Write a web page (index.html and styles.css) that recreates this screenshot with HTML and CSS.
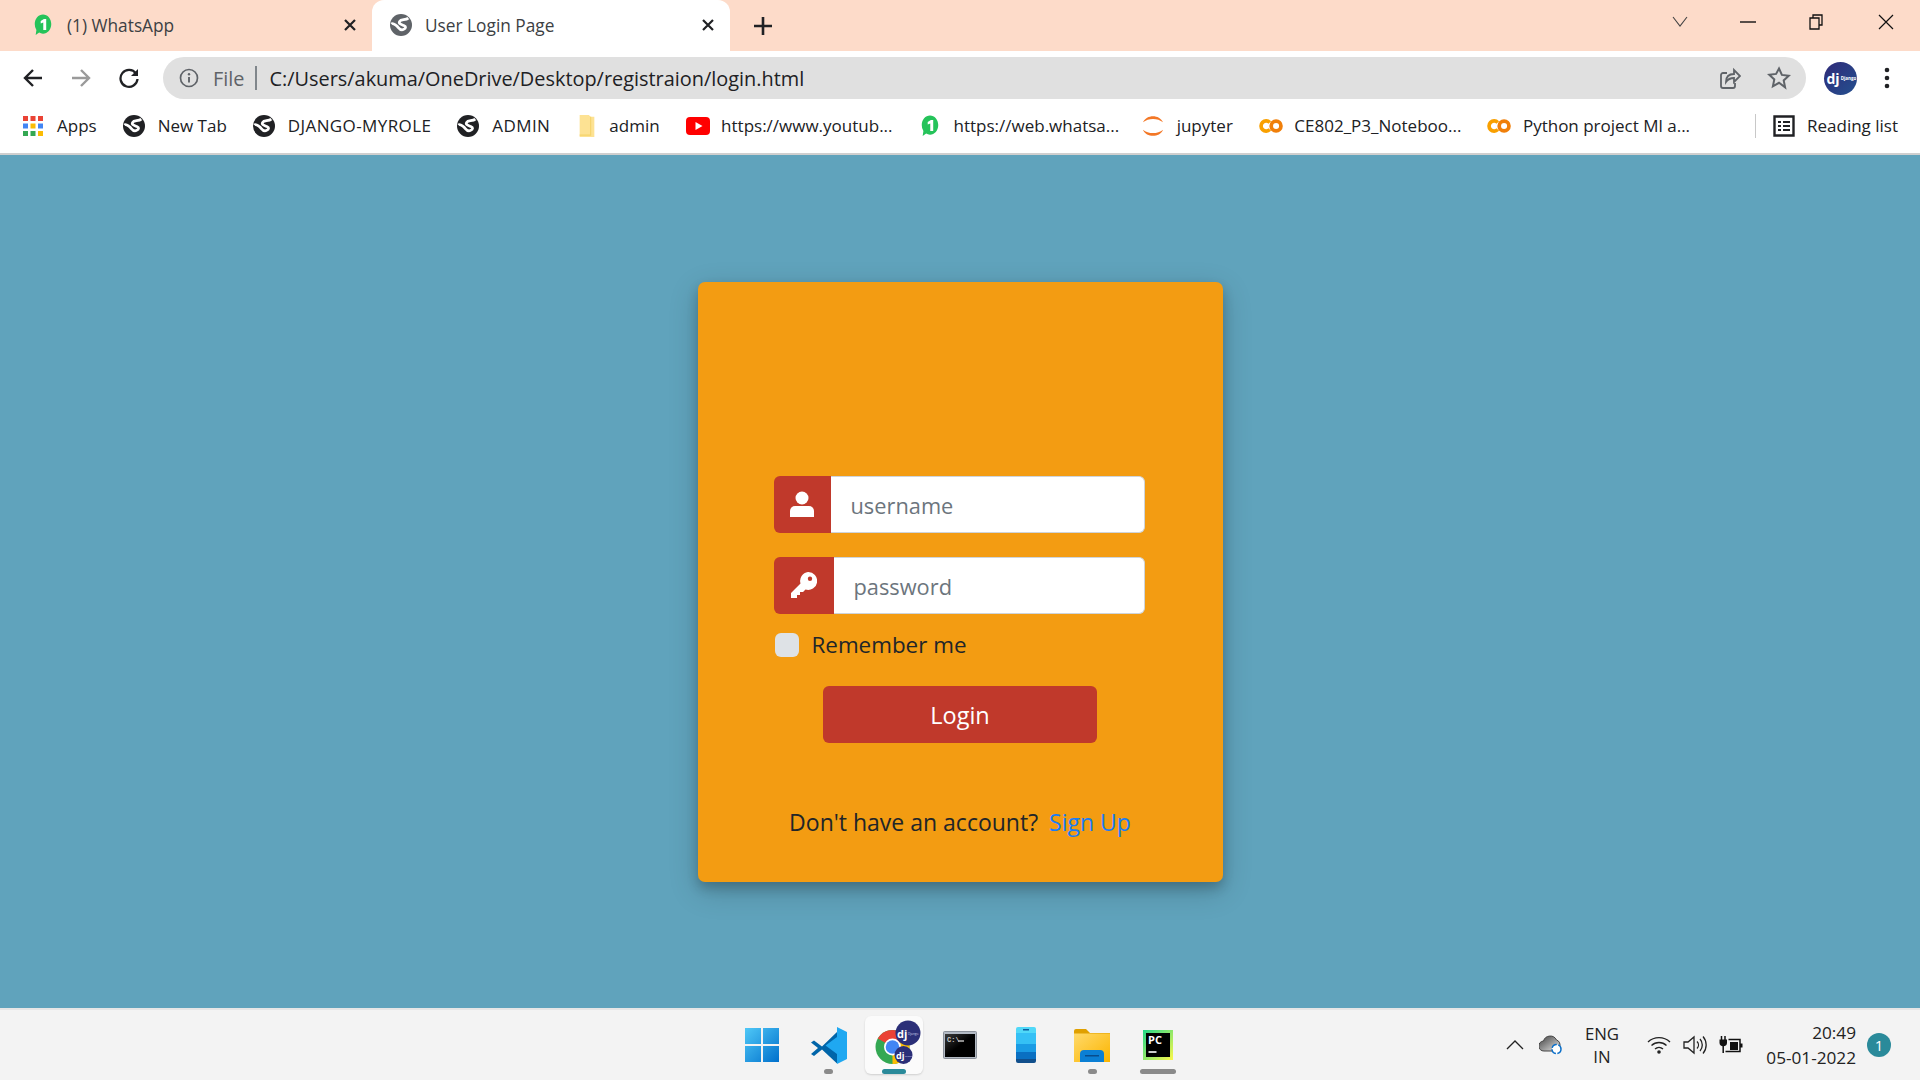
FILE: index.html
```html
<!DOCTYPE html>
<html lang="en">

<head>
  <meta charset="UTF-8">
  <meta name="viewport" content="width=device-width, initial-scale=1.0">
  <title>User Login Page</title>
  <link rel="stylesheet" href="styles.css">
</head>

<body>
  <svg class="defs" width="0" height="0">
    <symbol id="globe" viewBox="0 0 24 24">
      <circle cx="12" cy="12" r="12" fill="currentColor" />
      <path fill="none" stroke="#fff" stroke-width="3" d="M20 4.500c-3 2.500-8 1-9.500 3.500s2 3.500 4.500 4.500 3 3-.5 4.500-5-2-7-4-5-3-6-2" />
    </symbol>
    <symbol id="whatsapp" viewBox="0 0 24 24">
      <path fill="#25c35a" d="M12 .5c5 0 9 4.500 9 10.500s-4 10.500-9 10.500c-1.500 0-3-.5-4.200-1.200L4 23l.8-5.500A11.500 11.500 0 0 1 3 11C3 5 7 .5 12 .5z" />
      <path fill="#fff" d="M9.500 7.500l3.500-2h2.500v12h-3.200V9.400l-2.800 1z" />
    </symbol>
    <symbol id="colab" viewBox="0 0 26 18">
      <path fill="none" stroke="#f9a000" stroke-width="4" d="M11.700 5.200A5.500 5.500 0 1 0 11.700 12.800" />
      <circle cx="18.500" cy="9" r="5.300" fill="none" stroke="#f07f0a" stroke-width="4" />
    </symbol>
  </svg>

  <header class="chrome">
    <div class="tabbar">
      <div class="tab">
        <svg class="fav"><use href="#whatsapp" /></svg>
        <span class="tab-title">(1) WhatsApp</span>
        <span class="tab-close"><svg width="14" height="14" viewBox="0 0 14 14"><path d="M2 2l10 10M12 2L2 12" stroke="#202124" stroke-width="2.200" /></svg></span>
      </div>
      <div class="tab tab-active">
        <svg class="fav globe-grey"><use href="#globe" /></svg>
        <span class="tab-title">User Login Page</span>
        <span class="tab-close"><svg width="14" height="14" viewBox="0 0 14 14"><path d="M2 2l10 10M12 2L2 12" stroke="#202124" stroke-width="2.200" /></svg></span>
      </div>
      <svg class="new-tab" width="20" height="20" viewBox="0 0 20 20"><path d="M10 1v18M1 10h18" stroke="#202124" stroke-width="2.600" /></svg>
      <div class="window-btns">
        <svg width="16" height="12" viewBox="0 0 16 12"><path d="M1 1l7 9 7-9" fill="none" stroke="#444" stroke-width="1.100" /></svg>
        <svg class="win-min" width="16" height="2" viewBox="0 0 16 2"><path d="M0 1h16" stroke="#111" stroke-width="1.400" /></svg>
        <svg class="win-max" width="16" height="16" viewBox="0 0 16 16"><path d="M2 4h9v11H2zM5 4V1h9v10h-3" fill="none" stroke="#111" stroke-width="1.300" /></svg>
        <svg class="win-close" width="16" height="16" viewBox="0 0 16 16"><path d="M1 1l14 14M15 1L1 15" stroke="#111" stroke-width="1.200" /></svg>
      </div>
    </div>

    <div class="toolbar">
      <svg class="nav-btn" width="22" height="22" viewBox="0 0 22 22"><path d="M20 11H3M11 3l-8 8 8 8" fill="none" stroke="#202124" stroke-width="2.400" /></svg>
      <svg class="nav-btn" width="22" height="22" viewBox="0 0 22 22"><path d="M2 11h17M11 3l8 8-8 8" fill="none" stroke="#9a9a9a" stroke-width="2.400" /></svg>
      <svg class="nav-btn" width="22" height="22" viewBox="0 0 22 22"><path d="M18 6.500A8.500 8.500 0 1 0 19.500 12" fill="none" stroke="#202124" stroke-width="2.300" /><path d="M20 2v7h-7z" fill="#202124" /></svg>
      <div class="omnibox">
        <svg class="info" width="20" height="20" viewBox="0 0 20 20"><circle cx="10" cy="10" r="8.500" fill="none" stroke="#5f6368" stroke-width="1.700" /><path d="M10 9v5.500" stroke="#5f6368" stroke-width="1.900" /><circle cx="10" cy="6.300" r="1.200" fill="#5f6368" /></svg>
        <span class="scheme">File</span>
        <span class="omni-sep"></span>
        <span class="url">C:/Users/akuma/OneDrive/Desktop/registraion/login.html</span>
        <svg class="share" width="22" height="24" viewBox="0 0 22 24"><path d="M8 7H4a2 2 0 0 0-2 2v11a2 2 0 0 0 2 2h10a2 2 0 0 0 2-2v-3" fill="none" stroke="#5f6368" stroke-width="1.800" /><path d="M7 16c0-5 3-8 8-8V4l6 6-6 6v-4c-4 0-6 1-8 4z" fill="none" stroke="#5f6368" stroke-width="1.800" /></svg>
        <svg class="star" width="24" height="24" viewBox="0 0 24 24"><path d="M12 2.500l2.900 6.400 6.900.8-5.100 4.700 1.400 6.900L12 16.800l-6.100 3.500 1.400-6.900-5.100-4.700 6.900-.8z" fill="none" stroke="#5f6368" stroke-width="2" /></svg>
      </div>
      <div class="avatar"><span class="avatar-dj">dj</span><span class="avatar-name">Django</span></div>
      <svg class="dots" width="6" height="22" viewBox="0 0 6 22"><circle cx="3" cy="3" r="2.300" fill="#202124" /><circle cx="3" cy="11" r="2.300" fill="#202124" /><circle cx="3" cy="19" r="2.300" fill="#202124" /></svg>
    </div>

    <nav class="bookmarks">
      <a class="bm bm-apps">
        <svg class="bm-icon" viewBox="0 0 20 20">
          <rect x="0" y="0" width="5" height="5" fill="#ea4335" /><rect x="7.500" y="0" width="5" height="5" fill="#ea4335" /><rect x="15" y="0" width="5" height="5" fill="#ea4335" />
          <rect x="0" y="7.500" width="5" height="5" fill="#4285f4" /><rect x="7.500" y="7.500" width="5" height="5" fill="#fbbc04" /><rect x="15" y="7.500" width="5" height="5" fill="#4285f4" />
          <rect x="0" y="15" width="5" height="5" fill="#34a853" /><rect x="7.500" y="15" width="5" height="5" fill="#34a853" /><rect x="15" y="15" width="5" height="5" fill="#fbbc04" />
        </svg>
        Apps
      </a>
      <a class="bm"><svg class="bm-icon"><use href="#globe" /></svg>New Tab</a>
      <a class="bm bm-caps"><svg class="bm-icon"><use href="#globe" /></svg>DJANGO-MYROLE</a>
      <a class="bm bm-caps"><svg class="bm-icon"><use href="#globe" /></svg>ADMIN</a>
      <a class="bm"><svg class="bm-icon bm-folder" viewBox="0 0 18 24"><path d="M1 0h10l2 2h4v22H1z" fill="#fde293" /><path d="M13 2v20H1" fill="none" stroke="#f5d36b" stroke-width="1.200" /></svg>admin</a>
      <a class="bm"><svg class="bm-icon bm-wide" viewBox="0 0 24 18"><rect width="24" height="18" rx="4" fill="#f00" /><path d="M9.500 5v8l7-4z" fill="#fff" /></svg>https://www.youtub...</a>
      <a class="bm bm-tight"><svg class="bm-icon"><use href="#whatsapp" /></svg>https://web.whatsa...</a>
      <a class="bm"><svg class="bm-icon bm-wide" viewBox="0 0 24 24"><path d="M1 8C5-1 19-1 23 8 17 3 7 3 1 8z" fill="#f37726" /><path d="M1 16c4 9 18 9 22 0-6 5-16 5-22 0z" fill="#f37726" /></svg>jupyter</a>
      <a class="bm"><svg class="bm-icon bm-wide"><use href="#colab" /></svg>CE802_P3_Noteboo...</a>
      <a class="bm"><svg class="bm-icon bm-wide"><use href="#colab" /></svg>Python project Ml a...</a>
      <span class="bm-sep"></span>
      <a class="bm bm-reading"><svg class="bm-icon" viewBox="0 0 22 22"><path d="M1.500 1.500h19v19h-19z" fill="none" stroke="#202124" stroke-width="2.400" /><path d="M5 7h3M5 11h3M5 15h3M10 7h7M10 11h7M10 15h7" stroke="#202124" stroke-width="2" /></svg>Reading list</a>
    </nav>
  </header>

  <main class="page">
    <div class="card">
      <form class="login-form">
        <div class="input-group">
          <span class="prepend">
            <svg width="24" height="26" viewBox="0 0 24 26"><circle cx="12" cy="7" r="6.500" fill="#fff" /><path d="M5 15h14a5 5 0 0 1 5 5v6H0v-6a5 5 0 0 1 5-5z" fill="#fff" /></svg>
          </span>
          <input class="field" type="text" name="username" placeholder="username">
        </div>
        <div class="input-group">
          <span class="prepend prepend-wide">
            <svg width="26" height="26" viewBox="0 0 26 26"><path fill="#fff" fill-rule="evenodd" d="M17 0a9 9 0 1 1-2.500 17.600L12 20H9v3H6v3H0v-5l9.500-9.500A9 9 0 0 1 17 0zm2 4.500a2.200 2.200 0 1 0 0 4.400 2.200 2.200 0 0 0 0-4.400z" /></svg>
          </span>
          <input class="field" type="password" name="password" placeholder="password">
        </div>
        <label class="remember">
          <input class="check" type="checkbox" name="remember">
          Remember me
        </label>
        <button class="login-btn" type="button">Login</button>
      </form>
      <p class="signup">Don't have an account? <a href="#">Sign Up</a></p>
    </div>
  </main>

  <footer class="taskbar">
    <div class="task-icons">
      <div class="slot">
        <svg width="36" height="36" viewBox="0 0 36 36">
          <defs><linearGradient id="win" x1="0" y1="0" x2="1" y2="1"><stop offset="0" stop-color="#4fc8f7" /><stop offset="1" stop-color="#0070cc" /></linearGradient></defs>
          <path fill="url(#win)" d="M1 1h16v16H1zM19 1h16v16H19zM1 19h16v16H1zM19 19h16v16H19z" />
        </svg>
      </div>
      <div class="slot has-dot">
        <svg width="37" height="37" viewBox="0 0 37 37">
          <path fill="#0065a9" d="M27 5L12 19.500 4 13.500 1 15.500 8 21 1 27l3 2 8-6.500 15 14z" />
          <path fill="#1fa8f1" d="M27 0l10 5v27l-10 5zm0 10L15.500 18.500 27 27z" />
        </svg>
      </div>
      <div class="slot slot-active">
        <svg width="54" height="52" viewBox="0 0 54 52">
          <circle cx="25.500" cy="28" r="17" fill="#34a853" />
          <path d="M40.200 19.500A17 17 0 0 0 10.800 19.500L25.500 28z" fill="#ea4335" />
          <path d="M40.200 19.500A17 17 0 0 1 25.500 45V28z" fill="#fbbc04" />
          <circle cx="25.500" cy="28" r="8.500" fill="#fff" />
          <circle cx="25.500" cy="28" r="6.800" fill="#4285f4" />
          <circle cx="41" cy="14" r="12.500" fill="#2b2f78" />
          <circle cx="36.500" cy="36" r="9" fill="#2b2f78" />
          <text class="dj-big" x="30" y="19">dj</text>
          <text class="dj-name" x="41" y="16">Django</text>
          <text class="dj-small" x="29" y="40">dj</text>
          <text class="dj-name-small" x="38" y="38">Django</text>
        </svg>
      </div>
      <div class="slot">
        <svg width="34" height="28" viewBox="0 0 34 28">
          <defs><linearGradient id="cmd" x1="0" y1="0" x2="1" y2="1"><stop offset="0" stop-color="#3a3a3a" /><stop offset=".5" stop-color="#000" /></linearGradient></defs>
          <rect x=".5" y=".5" width="33" height="27" rx="1" fill="#b3bac4" stroke="#8a9099" />
          <rect x="2" y="3" width="30" height="23" fill="url(#cmd)" />
          <text class="cmd-text" x="4" y="11">C:\</text>
          <path d="M15 10h6" stroke="#bbb" stroke-width="1.500" />
        </svg>
      </div>
      <div class="slot">
        <svg width="20" height="36" viewBox="0 0 20 36">
          <defs><clipPath id="phone"><rect width="20" height="36" rx="2" /></clipPath></defs>
          <g clip-path="url(#phone)">
            <rect width="20" height="6" fill="#50d8f8" />
            <rect y="6" width="20" height="11" fill="#35c0f5" />
            <rect y="17" width="20" height="8" fill="#1a9be4" />
            <rect y="25" width="20" height="7" fill="#0a70c2" />
            <rect y="32" width="20" height="4" fill="#114f8c" />
          </g>
          <rect x="7" y="2" width="6" height="1.500" fill="#0d5c9e" />
        </svg>
      </div>
      <div class="slot has-dot">
        <svg width="36" height="33" viewBox="0 0 36 33">
          <defs><linearGradient id="folder" x1="0" y1="0" x2="1" y2="1"><stop offset="0" stop-color="#ffd96a" /><stop offset="1" stop-color="#fbb500" /></linearGradient></defs>
          <path d="M0 2a2 2 0 0 1 2-2h10l4 4h20v8H0z" fill="#e0a000" />
          <path d="M0 4.500h36V33H0z" fill="url(#folder)" />
          <path d="M6 33V25a4 4 0 0 1 4-4h16a4 4 0 0 1 4 4v8z" fill="#0b7fd4" />
          <path d="M11 26h14v1.500H11z" fill="#084c8c" />
        </svg>
      </div>
      <div class="slot has-bar">
        <svg width="30" height="30" viewBox="0 0 30 30">
          <defs><linearGradient id="pc" x1="0" y1="0" x2="1" y2="1"><stop offset="0" stop-color="#21d789" /><stop offset="1" stop-color="#fcf84a" /></linearGradient></defs>
          <rect width="30" height="30" fill="url(#pc)" />
          <rect x="3" y="3" width="24" height="24" fill="#000" />
          <text class="pc-text" x="5" y="14">PC</text>
          <path d="M5.500 22h8" stroke="#fff" stroke-width="1.600" />
        </svg>
      </div>
    </div>
    <div class="tray">
      <svg class="tray-chevron" width="18" height="10" viewBox="0 0 18 10"><path d="M1 9l8-8 8 8" fill="none" stroke="#222" stroke-width="1.300" /></svg>
      <svg class="tray-cloud" width="24" height="20" viewBox="0 0 24 20">
        <defs><linearGradient id="cloud" x1="0" y1="0" x2="1" y2="1"><stop offset="0" stop-color="#3c3c3c" /><stop offset="1" stop-color="#e8e8e8" /></linearGradient></defs>
        <path d="M5 16a5 5 0 0 1-.5-10 7 7 0 0 1 13-1 5 5 0 0 1 3 7l-4 4z" fill="url(#cloud)" stroke="#444" stroke-width="1" />
        <circle cx="17.500" cy="14" r="4.500" fill="#fff" stroke="#0b6fc9" stroke-width="1.500" stroke-dasharray="6 1.500" />
      </svg>
      <div class="lang">ENG<br>IN</div>
      <svg class="tray-icon" width="24" height="20" viewBox="0 0 24 20"><path d="M1 7a16 16 0 0 1 22 0M4.500 10.500a11 11 0 0 1 15 0M8 14a6 6 0 0 1 8 0" fill="none" stroke="#222" stroke-width="1.400" /><circle cx="12" cy="17" r="1.800" fill="#222" /></svg>
      <svg class="tray-icon" width="24" height="20" viewBox="0 0 24 20"><path d="M1 7h4l6-5v16l-6-5H1z" fill="none" stroke="#222" stroke-width="1.300" /><path d="M14 6.500a5 5 0 0 1 0 7M17 4a9 9 0 0 1 0 12M20 1.500a13 13 0 0 1 0 17" fill="none" stroke="#222" stroke-width="1.300" /></svg>
      <svg class="tray-icon" width="24" height="20" viewBox="0 0 24 20">
        <path d="M2.500 1v4M6 1v4M4.200 10v8" stroke="#111" stroke-width="1.500" />
        <path d="M.5 4.500h7.500v3a3.700 3.700 0 0 1-7.500 0z" fill="#111" />
        <path d="M9.500 4.500h11.500v12H6.500" fill="none" stroke="#111" stroke-width="1.500" />
        <path d="M11 7h8v8h-8z" fill="#111" />
        <path d="M21 8.500h2.500v4H21z" fill="#111" />
      </svg>
      <div class="clock">20:49<br>05-01-2022</div>
      <span class="notif">1</span>
    </div>
  </footer>
</body>

</html>
```
FILE: styles.css
```css
* {
  box-sizing: border-box;
}

html,
body {
  margin: 0;
  height: 1080px;
  overflow: hidden;
}

body {
  display: flex;
  flex-direction: column;
  font-family: 'Open Sans', sans-serif;
  background-color: #60a3bc;
  color: #202124;
}

.defs {
  position: absolute;
}

/* browser chrome */
.chrome {
  background-color: #fff;
  border-bottom: 2px solid #cfcfcf;
  height: 155px;
}

.tabbar {
  display: flex;
  align-items: center;
  height: 51px;
  padding-left: 14px;
  background-color: #fddbc9;
}

.tab {
  display: flex;
  align-items: center;
  width: 358px;
  height: 51px;
  padding: 0 15px 1px 18px;
  font-size: 17.300px;
  color: #3c4043;
}

.tab-active {
  background-color: #fff;
  border-radius: 12px 12px 0 0;
}

.fav {
  width: 22px;
  height: 22px;
  margin-right: 13px;
}

.globe-grey {
  color: #5f6368;
}

.tab-title {
  flex: 1;
}

.tab-close {
  display: flex;
}

.new-tab {
  margin-left: 23px;
}

.window-btns {
  display: flex;
  align-items: center;
  margin-left: auto;
  margin-right: 26px;
  padding-bottom: 8px;
}

.window-btns svg {
  margin-left: 52px;
}

.window-btns .win-close {
  margin-left: 54px;
}

.toolbar {
  display: flex;
  align-items: center;
  height: 49px;
  padding: 6px 0 1px 22px;
}

.nav-btn {
  margin-right: 26px;
}

.omnibox {
  display: flex;
  align-items: center;
  width: 1643px;
  height: 42px;
  margin-left: -3px;
  padding: 0 15px 0 16px;
  background-color: #e0e0e0;
  border-radius: 21px;
}

.scheme {
  margin-left: 14px;
  font-size: 19.900px;
  color: #5f6368;
}

.omni-sep {
  width: 1.500px;
  height: 24px;
  margin: 0 12.500px 0 11px;
  background-color: #80868b;
}

.url {
  flex: 1;
  font-size: 19.900px;
}

.share {
  margin-right: 26px;
}

.avatar {
  display: flex;
  align-items: center;
  gap: 1px;
  width: 33px;
  height: 33px;
  margin-left: 17.500px;
  padding-left: 3px;
  border-radius: 50%;
  background: linear-gradient(135deg, #2f2a78, #24508f);
  color: #fff;
}

.avatar-dj {
  font-size: 14px;
  font-weight: 700;
}

.avatar-name {
  font-size: 4.500px;
  font-weight: 700;
}

.dots {
  margin-left: 27.500px;
}

.bookmarks {
  display: flex;
  align-items: center;
  height: 53px;
  padding: 0 22px 2px 23px;
  font-size: 17px;
  white-space: nowrap;
}

.bm {
  display: flex;
  align-items: center;
  margin-right: 26px;
  color: #202124;
}

.bm-tight {
  margin-right: 22px;
}

.bm-caps {
  letter-spacing: 0.400px;
}

.bm-icon {
  width: 22px;
  height: 22px;
  margin-right: 13px;
  color: #202124;
}

.bm-wide {
  width: 24px;
  margin-right: 11.500px;
}

.bm-folder {
  margin-right: 11px;
}

.bm-apps .bm-icon {
  width: 20px;
  height: 20px;
  margin-right: 14px;
}

.bm-sep {
  width: 1px;
  height: 24px;
  margin-left: auto;
  margin-right: 17px;
  background-color: #c8c8c8;
}

.bm-reading {
  margin-right: 0;
}

.bm-reading .bm-icon {
  margin-right: 12px;
}

/* login page */
.page {
  flex: 1;
  display: flex;
  align-items: center;
  justify-content: center;
}

.card {
  width: 525px;
  height: 600px;
  padding: 194px 78px 0 76px;
  background-color: #f39c12;
  border-radius: 7px;
  box-shadow: 0 6px 12px rgba(0, 0, 0, 0.2), 0 9px 30px rgba(0, 0, 0, 0.19);
}

.login-form {
  display: flex;
  flex-direction: column;
}

.input-group {
  display: flex;
  height: 57px;
  margin-bottom: 24px;
}

.prepend {
  display: flex;
  align-items: center;
  justify-content: center;
  flex: none;
  width: 57px;
  background-color: #c0392b;
  border-radius: 6px 0 0 6px;
}

.prepend-wide {
  width: 60px;
}

.field {
  flex: 1;
  min-width: 0;
  padding: 2px 20px 0;
  font-family: inherit;
  font-size: 21.800px;
  color: #495057;
  background-color: #fff;
  border: 1.500px solid #ced4da;
  border-left: none;
  border-radius: 0 6px 6px 0;
}

.field::placeholder {
  color: #6c757d;
  opacity: 1;
}

.remember {
  display: flex;
  align-items: center;
  height: 24px;
  margin: -5px 0 29px 1px;
  font-size: 22.400px;
  color: #212529;
}

.check {
  appearance: none;
  width: 24px;
  height: 24px;
  margin: 0 13px 0 0;
  background-color: #dee2e6;
  border-radius: 6px;
}

.login-btn {
  align-self: center;
  width: 274px;
  height: 57px;
  margin-left: 2px;
  padding-top: 2px;
  font-family: inherit;
  font-size: 23.500px;
  color: #fff;
  background-color: #c0392b;
  border: none;
  border-radius: 6px;
  cursor: pointer;
}

.signup {
  margin: 63px -2px 0 0;
  text-align: center;
  font-size: 23px;
  color: #212529;
  white-space: nowrap;
}

.signup a {
  margin-left: 5px;
  color: #1a7cf5;
  text-decoration: none;
}

/* windows taskbar */
.taskbar {
  position: relative;
  display: flex;
  justify-content: center;
  align-items: center;
  height: 72px;
  background-color: #f3f3f3;
  border-top: 2px solid #e6e6e6;
}

.task-icons {
  display: flex;
}

.slot {
  position: relative;
  display: flex;
  align-items: center;
  justify-content: center;
  width: 66px;
  height: 58px;
}

.slot-active {
  width: 58px;
  margin: 0 4px;
  background-color: #fbfbfb;
  border-radius: 6px;
  box-shadow: 0 1px 2px rgba(0, 0, 0, 0.15);
}

.slot-active svg {
  flex: none;
}

.slot-active::after,
.has-dot::after,
.has-bar::after {
  content: '';
  position: absolute;
  bottom: 0;
  left: 50%;
  width: 9px;
  height: 5px;
  margin-left: -4px;
  border-radius: 3px;
  background-color: #8a8a8a;
}

.slot-active::after {
  width: 24px;
  margin-left: -12px;
  background-color: #2a8a9a;
}

.has-bar::after {
  width: 36px;
  margin-left: -18px;
}

.dj-big {
  font: 700 11px 'Open Sans', sans-serif;
  fill: #fff;
}

.dj-small {
  font: 700 9px 'Open Sans', sans-serif;
  fill: #fff;
}

.dj-name {
  font: 3.200px 'Open Sans', sans-serif;
  fill: #c9cce8;
}

.dj-name-small {
  font: 2.500px 'Open Sans', sans-serif;
  fill: #c9cce8;
}

.cmd-text {
  font: 700 7px 'Liberation Mono', monospace;
  fill: #ccc;
}

.pc-text {
  font: 700 11px 'Open Sans', sans-serif;
  fill: #fff;
}

.tray {
  position: absolute;
  right: 29px;
  top: 0;
  bottom: 0;
  display: flex;
  align-items: center;
  font-size: 16.800px;
  color: #222;
}

.tray-cloud {
  margin-left: 15px;
}

.lang {
  width: 78px;
  text-align: center;
  line-height: 23px;
}

.tray-icon {
  margin-left: 12px;
}

.lang + .tray-icon {
  margin-left: 6px;
}

.clock {
  width: 113px;
  font-size: 17.200px;
  text-align: right;
  line-height: 25px;
}

.notif {
  display: flex;
  align-items: center;
  justify-content: center;
  width: 24px;
  height: 24px;
  margin-left: 11px;
  border-radius: 50%;
  background-color: #2a8a9a;
  color: #fff;
  font-size: 15px;
}
```
